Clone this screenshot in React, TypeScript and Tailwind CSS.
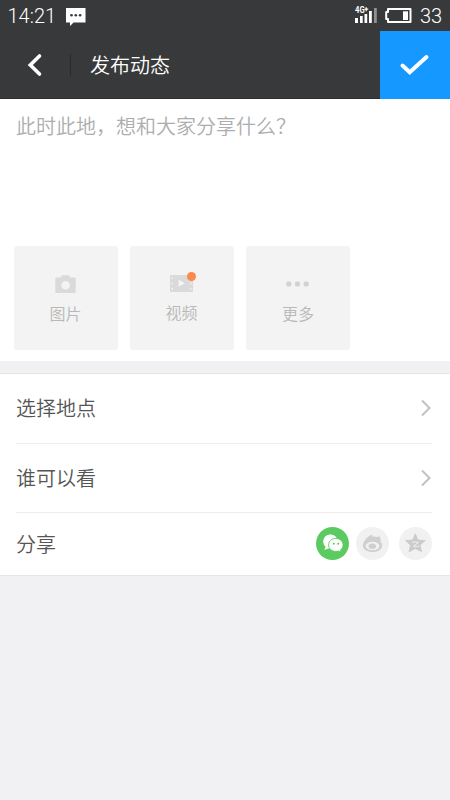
import type { ReactNode } from "react";

function StatusBar() {
  return (
    <div className="flex h-[31px] items-center bg-[#38393b] pl-[7.500px] pr-[8px] font-[Roboto,sans-serif] text-white">
      <span className="w-[49px] pt-[1px] text-[20px] leading-none font-light">14:21</span>
      <svg className="ml-[9px] mt-[3px] h-[18px] w-[20px]" viewBox="0 0 20 18" fill="#fff">
        <path d="M0 0h19.5v14.5H7.500L4 18v-3.500H0z" />
        <g fill="#38393b">
          <circle cx="5.500" cy="7.300" r="1.300" />
          <circle cx="9.800" cy="7.300" r="1.300" />
          <circle cx="14.100" cy="7.300" r="1.300" />
        </g>
      </svg>
      <div className="relative ml-auto h-[31px] w-[22px]">
        <span className="absolute top-[6px] left-0 origin-left scale-x-[0.85] text-[9px] leading-none font-bold">4G</span>
        <svg className="absolute inset-0" width="22" height="31" viewBox="0 0 22 31" fill="#fff">
          <path d="M0 18h3v5H0zM5 16h2.700v7H5zM9.500 14h2.700v9H9.500zM14 11h2.800v12H14z" />
          <path d="M19 8h2.800v15H19z" fill="#8f9092" />
          <path d="M10.600 7.200h1.200v1.400h1.400v1.200h-1.400v1.400h-1.200V9.800H9.500V8.600h1.100z" />
        </svg>
      </div>
      <svg className="ml-[7px]" width="28" height="31" viewBox="0 0 28 31" fill="none">
        <path d="M4 9h22.500v13H4v-3H2.200v-7H4z" stroke="#fff" strokeWidth="2" strokeLinejoin="round" />
        <path d="M19 11.300h5v8.700h-5z" fill="#fff" />
      </svg>
      <span className="ml-[8px] w-[22px] pt-[1px] text-[20px] leading-none font-light">33</span>
    </div>
  );
}

function Header() {
  return (
    <div className="flex h-[68px] items-center border-b border-[#2d2e30] bg-[#38393b]">
      <button type="button" aria-label="返回" className="flex w-[70px] justify-center">
        <svg width="16" height="24" viewBox="0 0 16 24" fill="none">
          <path d="M12.500 3L3.300 12l9.200 9" stroke="#fff" strokeWidth="3.600" strokeLinecap="round" strokeLinejoin="miter" />
        </svg>
      </button>
      <span className="h-[22px] w-px bg-[#292a2c]" />
      <h1 className="ml-[19px] text-[20px] font-[350] leading-none text-white">发布动态</h1>
      <button type="button" aria-label="发布" className="ml-auto flex h-[68px] w-[70px] items-center justify-center self-start bg-[#1598ff]">
        <svg width="32" height="24" viewBox="0 0 32 24" fill="none">
          <path d="M3.500 12.500l7.200 6.800L27.500 4" stroke="#fff" strokeWidth="4" strokeLinecap="round" />
        </svg>
      </button>
    </div>
  );
}

function Tile({ label, labelClass, children }: { label: string; labelClass: string; children: ReactNode }) {
  return (
    <button type="button" className="flex h-[104px] w-[104px] flex-col items-center rounded-[3px] bg-[#f3f3f3]">
      <span className="flex h-[56px] w-full items-end justify-center">{children}</span>
      <span className={`text-[16px] leading-none font-[350] text-[#b8b8b8] ${labelClass}`}>{label}</span>
    </button>
  );
}

function CameraIcon() {
  return (
    <svg className="mb-[9px] mr-[1px]" width="21" height="18" viewBox="0 0 21 18">
      <path
        fill="#dadada"
        fillRule="evenodd"
        d="M1.500 2.500h4L7 .3h7l1.500 2.200h4q1.200 0 1.200 1.200V18H.3V3.700Q.3 2.500 1.500 2.500zM10.600 6a4.300 4.300 0 1 0 .01 0z"
      />
    </svg>
  );
}

function VideoIcon() {
  return (
    <span className="relative mb-[10px] mr-[1px]">
      <svg className="block" width="23" height="17" viewBox="0 0 23 17">
        <rect width="23" height="17" rx="1" fill="#dadada" />
        <path d="M8.700 4.800v7l6-3.500z" fill="#f6f6f6" />
        <path
          d="M1.500 2.500h1.500v1.500h-1.500zM1.500 7.800h1.500v1.500h-1.500zM1.500 13h1.500v1.500h-1.500zM20 7.800h1.500v1.500h-1.500zM20 13h1.500v1.500h-1.500z"
          fill="#f3f3f3"
        />
      </svg>
      <span className="absolute -top-[3px] -right-[3px] h-[9px] w-[9px] rounded-full bg-[#fb8a4b]" />
    </span>
  );
}

function MoreIcon() {
  return (
    <svg className="mb-[15px] mr-[1px]" width="23" height="6" viewBox="0 0 23 6" fill="#d2d2d2">
      <rect x="0.300" y="0.500" width="5" height="5" rx="1.800" />
      <rect x="9" y="0.500" width="5" height="5" rx="1.800" />
      <rect x="17.700" y="0.500" width="5" height="5" rx="1.800" />
    </svg>
  );
}

function LinkRow({ label }: { label: string }) {
  return (
    <div className="mr-[2px] flex h-[69.500px] items-center justify-between border-b border-[#ececec]">
      <span className="text-[20px] leading-none font-[350] text-[#555]">{label}</span>
      <svg className="text-[#c0c1c4]" width="12" height="18" viewBox="0 0 12 18" fill="none">
        <path d="M2 1.500L9.500 9 2 16.500" stroke="currentColor" strokeWidth="2" />
      </svg>
    </div>
  );
}

function WechatIcon() {
  return (
    <svg width="33" height="33" viewBox="0 0 33 33">
      <circle cx="16.500" cy="16.500" r="16.500" fill="#5bca60" />
      <path d="M15 7.500c-4.300 0-7.700 3.200-7.700 7.300 0 2.100.9 3.700 2.300 5l-1.300 3.200 3.900-1.500 3 .3z" fill="#fff" />
      <ellipse cx="14.500" cy="13.900" rx="7" ry="6.400" fill="#fff" />
      <path
        d="M19.800 11.400c-4 0-7.200 2.800-7.200 6.500s3.200 6.500 7.200 6.500c.9 0 1.700-.1 2.500-.4l3 1.100-.8-2.300c1.700-1.100 2.600-2.900 2.600-4.900 0-3.700-3.300-6.500-7.300-6.500z"
        fill="#fff"
        stroke="#5bca60"
        strokeWidth="0.900"
      />
      <g fill="#5bca60">
        <circle cx="17.800" cy="16.700" r="1" />
        <circle cx="22.200" cy="16.700" r="1" />
      </g>
    </svg>
  );
}

function WeiboIcon() {
  return (
    <svg width="33" height="33" viewBox="0 0 33 33">
      <circle cx="16.500" cy="16.500" r="16.500" fill="#f1f1f1" />
      <path
        fill="#cfcfcf"
        d="M16.500 7.800l-.5 2.200 2.700-.8 1 .8 4.200-.4.800 4.300-.5.800c1.300.9 2 2.100 2 3.700 0 3.800-4.200 6.600-9.600 6.600S6.900 22.200 6.900 18.700c0-2.300 1.300-4.800 3.200-6.900 2-2.300 4.300-3.900 6.400-4z"
      />
      <ellipse cx="16.500" cy="19" rx="7" ry="4.300" fill="#f1f1f1" />
      <ellipse cx="16.300" cy="19.200" rx="3.700" ry="2.700" fill="#cfcfcf" />
    </svg>
  );
}

function QzoneIcon() {
  return (
    <svg width="33" height="33" viewBox="0 0 33 33">
      <circle cx="16.500" cy="16.500" r="16.500" fill="#f1f1f1" />
      <path
        fill="#cbcbcb"
        stroke="#cbcbcb"
        strokeWidth="0.800"
        strokeLinejoin="round"
        d="M16.300 6.800l2.700 6.200 7.200.5-5.100 4.600 1.500 6.700-6.300-3.300-6.300 3.300 1.600-6.700-5.200-4.600 7.200-.5z"
      />
      <path d="M12.800 15.300c2.300-.4 4.700-.4 7 0l-5.500 3.900c2.300.4 4 .4 6 0" fill="none" stroke="#f1f1f1" strokeWidth="1" />
    </svg>
  );
}

export default function App() {
  return (
    <div className="min-h-screen w-[450px] bg-[#f1f1f4] font-['Noto_Sans_CJK_SC',sans-serif]">
      <StatusBar />
      <Header />

      <section className="flex h-[262px] flex-col bg-white pl-[14px]">
        <p className="h-[147px] pt-[17px] pl-[2px] text-[20px] leading-none font-[350] text-[#adadad]">
          此时此地，想和大家分享什么？
        </p>
        <div className="flex gap-[12px]">
          <Tile label="图片" labelClass="mt-[3px] mr-[1px]">
            <CameraIcon />
          </Tile>
          <Tile label="视频" labelClass="mt-[2px] mr-[1px]">
            <VideoIcon />
          </Tile>
          <Tile label="更多" labelClass="mt-[3px]">
            <MoreIcon />
          </Tile>
        </div>
      </section>

      <section className="mt-3 border-y border-[#e5e5e7] bg-white px-4">
        <LinkRow label="选择地点" />
        <LinkRow label="谁可以看" />
        <div className="flex h-[62px] items-center pr-[2px]">
          <span className="mr-auto text-[20px] leading-none font-[350] text-[#555]">分享</span>
          <div className="flex pb-px">
            <WechatIcon />
            <span className="ml-[7px]">
              <WeiboIcon />
            </span>
            <span className="ml-[10px]">
              <QzoneIcon />
            </span>
          </div>
        </div>
      </section>
    </div>
  );
}
